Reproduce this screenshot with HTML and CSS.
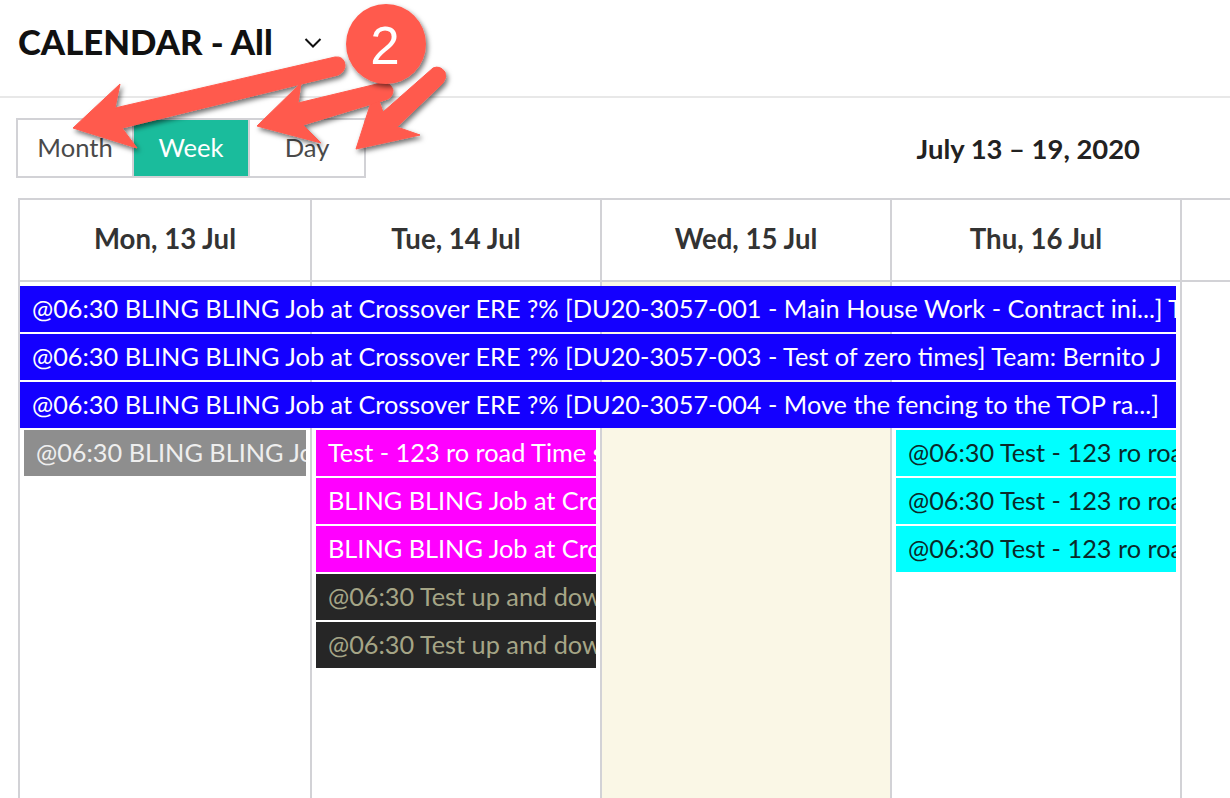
FILE: index.html
```html
<!DOCTYPE html>
<html lang="en">
<head>
    <meta charset="UTF-8">
    <meta name="viewport" content="width=device-width, initial-scale=1.0">
    <title>Calendar</title>
    <link rel="stylesheet" href="styles.css">
</head>
<body>
    <div class="page-header">
        <h1 class="page-title">CALENDAR - All</h1>
        <svg class="chevron" width="18" height="10" viewBox="0 0 18 10"><path d="M1.5 1 L9 8.5 L16.5 1" fill="none" stroke="#111" stroke-width="2"/></svg>
    </div>

    <div class="toolbar">
        <div class="view-tabs">
            <div class="view-tab">Month</div>
            <div class="view-tab active">Week</div>
            <div class="view-tab">Day</div>
        </div>
        <div class="date-range">July 13 – 19, 2020</div>
    </div>

    <div class="calendar">
        <div class="day-headers">
            <div class="day-header">Mon, 13 Jul</div>
            <div class="day-header">Tue, 14 Jul</div>
            <div class="day-header">Wed, 15 Jul</div>
            <div class="day-header">Thu, 16 Jul</div>
            <div class="day-header"></div>
        </div>
        <div class="week-body">
            <div class="day-cell col-1"></div>
            <div class="day-cell col-2"></div>
            <div class="day-cell col-3 today"></div>
            <div class="day-cell col-4"></div>
            <div class="day-cell col-5"></div>

            <div class="event event-blue span-week row-1">@06:30 BLING BLING Job at Crossover ERE ?% [DU20-3057-001 - Main House Work - Contract ini...] Team: Bernito J</div>
            <div class="event event-blue span-week row-2">@06:30 BLING BLING Job at Crossover ERE ?% [DU20-3057-003 - Test of zero times] Team: Bernito J</div>
            <div class="event event-blue span-week row-3">@06:30 BLING BLING Job at Crossover ERE ?% [DU20-3057-004 - Move the fencing to the TOP ra...]</div>

            <div class="event event-gray col-1 row-4">@06:30 BLING BLING Job at Crossover</div>

            <div class="event event-pink col-2 row-4">Test - 123 ro road Time sheet</div>
            <div class="event event-pink col-2 row-5">BLING BLING Job at Crossover</div>
            <div class="event event-pink col-2 row-6">BLING BLING Job at Crossover</div>
            <div class="event event-dark col-2 row-7">@06:30 Test up and down</div>
            <div class="event event-dark col-2 row-8">@06:30 Test up and down</div>

            <div class="event event-cyan col-4 row-4">@06:30 Test - 123 ro road</div>
            <div class="event event-cyan col-4 row-5">@06:30 Test - 123 ro road</div>
            <div class="event event-cyan col-4 row-6">@06:30 Test - 123 ro road</div>
        </div>
    </div>

    <!-- screenshot annotation drawn over the page -->
    <svg class="annotation" width="460" height="160" viewBox="0 0 460 160">
        <defs>
            <filter id="arrow-shadow" x="-10%" y="-20%" width="120%" height="140%">
                <feDropShadow dx="2" dy="3" stdDeviation="2.5" flood-color="#000" flood-opacity="0.55"/>
            </filter>
        </defs>
        <g fill="#ff5a4d" stroke="#ff5a4d" stroke-width="1" stroke-linejoin="round" filter="url(#arrow-shadow)">
            <path d="M356 149 L375 90 L383 112 L433 68 Q440 65 445 72 Q447 78 443 83 L397 127 L420 135 Z"/>
            <path d="M257 126 L301 83 L298 103 L381 83 Q391 82 393 90 Q393 98 385 100 L303 125 L321 143 Z"/>
            <path d="M73 128 L120 84 L115 108 L335 57 Q344 56 345 65 Q345 72 338 75 L122 128 L137 148 Z"/>
        </g>
        <circle cx="386" cy="44" r="40" fill="#ff5a4d" filter="url(#arrow-shadow)"/>
        <text class="annotation-number" x="385" y="64" text-anchor="middle">2</text>
    </svg>
</body>
</html>
```

FILE: styles.css
```css
* {
    box-sizing: border-box;
}
body {
    margin: 0;
    height: 100vh;
    overflow: hidden;
    display: flex;
    flex-direction: column;
    background: white;
    font-family: "Lato", "Liberation Sans", sans-serif;
    color: #333;
}
.page-header {
    height: 98px;
    flex: none;
    display: flex;
    align-items: center;
    gap: 31px;
    padding: 0 18px 14px;
    border-bottom: 2px solid #e8e8e8;
}
.page-title {
    margin: 0;
    font-size: 34.7px;
    font-weight: 900;
    color: #111;
}
.chevron {
    margin-top: 4px;
}
.toolbar {
    flex: none;
    height: 100px;
    display: flex;
    align-items: center;
    justify-content: space-between;
    padding: 0 90px 0 16px;
}
.view-tabs {
    display: flex;
    height: 60px;
    border: 2px solid #d2d2d6;
}
.view-tab {
    width: 116px;
    padding-bottom: 2px;
    display: flex;
    align-items: center;
    justify-content: center;
    font-size: 25.6px;
    color: #4a4a4a;
    border-left: 2px solid #d2d2d6;
}
.view-tab:first-child {
    width: 114px;
    border-left: 0;
}
.view-tab.active {
    background: #1abc9c;
    color: white;
}
.date-range {
    font-size: 27.4px;
    font-weight: 700;
    color: #222;
}
.calendar {
    flex: 1;
    display: flex;
    flex-direction: column;
    margin-left: 18px;
    min-height: 0;
}
.day-headers {
    flex: none;
    height: 84px;
    display: grid;
    grid-template-columns: 292px 290px 290px 290px 1fr;
    border-top: 2px solid #d2d2d6;
    border-bottom: 2px solid #d2d2d6;
}
.day-header {
    display: flex;
    align-items: center;
    justify-content: center;
    padding-bottom: 3px;
    font-size: 27.6px;
    font-weight: 700;
    color: #333;
    border-left: 2px solid #d2d2d6;
}
.week-body {
    flex: 1;
    display: grid;
    grid-template-columns: 292px 290px 290px 290px 1fr;
    grid-template-rows: 2px repeat(8, 46px) 1fr;
    row-gap: 2px;
}
.day-cell {
    grid-row: 1 / -1;
    border-left: 2px solid #d2d2d6;
}
.day-cell.today {
    background: #faf7e6;
}
.col-1 { grid-column: 1; }
.col-2 { grid-column: 2; }
.col-3 { grid-column: 3; }
.col-4 { grid-column: 4; }
.col-5 { grid-column: 5; }
.row-1 { grid-row: 2; }
.row-2 { grid-row: 3; }
.row-3 { grid-row: 4; }
.row-4 { grid-row: 5; }
.row-5 { grid-row: 6; }
.row-6 { grid-row: 7; }
.row-7 { grid-row: 8; }
.row-8 { grid-row: 9; }
.event {
    margin: 0 4px 0 6px;
    padding-left: 12px;
    line-height: 45px;
    font-size: 25.3px;
    white-space: nowrap;
    overflow: hidden;
    color: white;
}
.span-week {
    grid-column: 1 / 5;
    margin-left: 2px;
}
.event-blue { background: #1400ff; }
.event-gray { background: #8e8e8e; color: #eee; }
.event-pink { background: #ff00ff; }
.event-dark { background: #262626; color: #a5a586; }
.event-cyan { background: #00ffff; color: #0a2a2a; }
.annotation {
    position: absolute;
    top: 0;
    left: 0;
}
.annotation-number {
    font-family: "Liberation Sans", sans-serif;
    font-size: 53px;
    fill: white;
}
```
